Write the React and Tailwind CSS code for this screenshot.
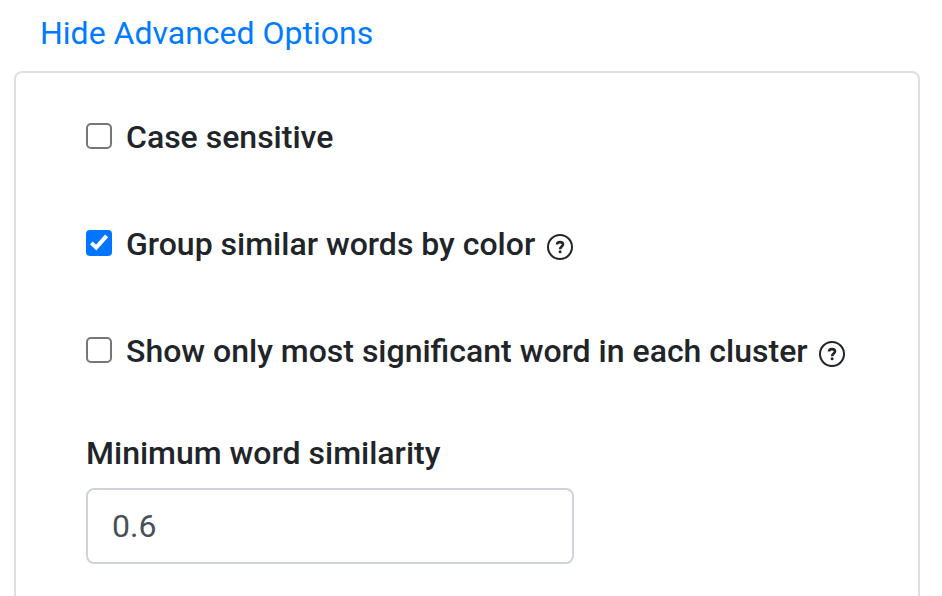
function Box({ checked }) {
  return (
    <svg className="mr-[14px] h-[26px] w-[26px] shrink-0" viewBox="0 0 26 26" fill="none">
      {checked ? (
        <>
          <rect width="26" height="26" rx="4" fill="#0075ff" />
          <path d="M5.4 12.8 10.2 17.6 20.6 5.9" stroke="#fff" strokeWidth="4" />
        </>
      ) : (
        <rect x="1" y="1" width="24" height="24" rx="4" fill="#fff" stroke="#767676" strokeWidth="2" />
      )}
    </svg>
  );
}

function Help() {
  return (
    <svg className="relative top-1 ml-[11.5px] h-[26px] w-[26px] shrink-0" viewBox="0 0 26 26" fill="none" stroke="#212529">
      <circle cx="13" cy="13" r="12" strokeWidth="2" />
      <path d="M10 10.6C10 8.9 11.2 8.1 13 8.1c1.9 0 3 .9 3 2.4 0 2-2.9 2.2-2.9 4.7" strokeWidth="2.6" />
      <circle cx="13.1" cy="17.8" r="1.5" fill="#212529" stroke="none" />
    </svg>
  );
}

function Option({ label, checked, help }) {
  return (
    <div className="flex h-12 items-center">
      <Box checked={checked} />
      <span className="relative top-px whitespace-nowrap">{label}</span>
      {help && <Help />}
    </div>
  );
}

export default function App() {
  return (
    <main className="h-[596px] w-[942px] overflow-hidden bg-white font-['Roboto',sans-serif] text-[32px] leading-[48px] font-medium text-[#212529]">
      <div className="ml-10 h-[71px] pt-[9px] font-normal text-[#007bff]">Hide Advanced Options</div>
      <section className="ml-[14px] h-[600px] w-[906px] rounded-lg border-2 border-[#dfdfdf] px-[70px] pt-[39px]">
        <div className="flex flex-col gap-[59px]">
          <Option label="Case sensitive" />
          <Option label="Group similar words by color" checked help />
          <Option label="Show only most significant word in each cluster" help />
        </div>
        <div className="mt-[55px]">Minimum word similarity</div>
        <div className="mt-[11px] flex h-[76px] w-[488px] items-center rounded-lg border-2 border-[#ced4da] pl-6 font-normal text-[#495057]">0.6</div>
      </section>
    </main>
  );
}
